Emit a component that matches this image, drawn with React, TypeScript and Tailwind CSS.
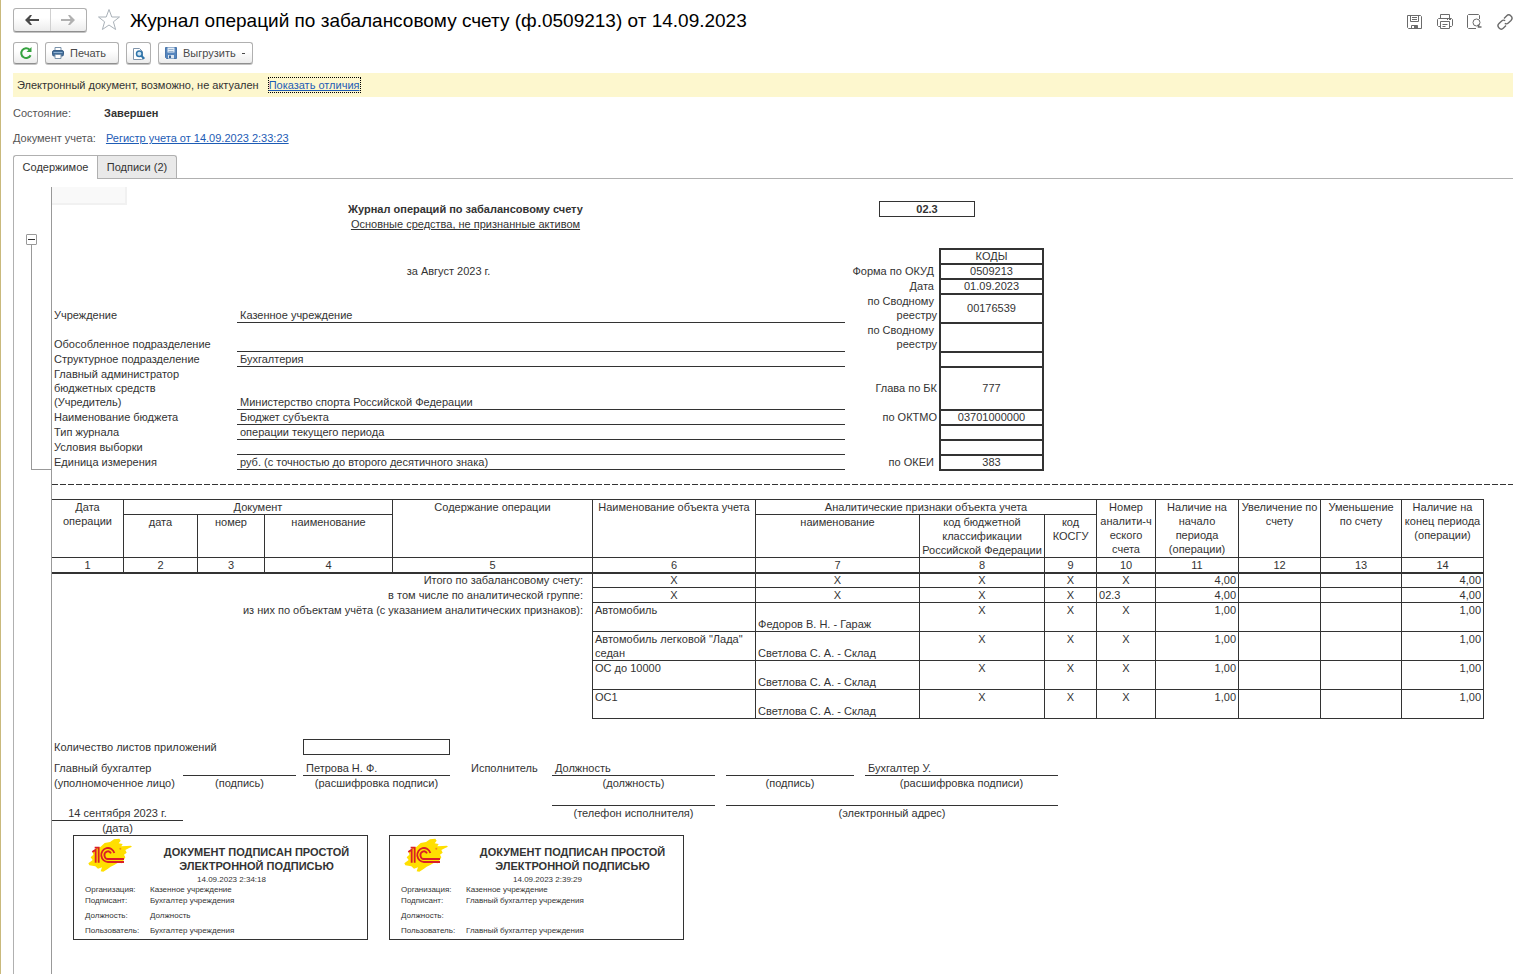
import { useState } from 'react';

const colWidths = [
  'w-[72px]', 'w-[74px]', 'w-[67px]', 'w-[128px]', 'w-[200px]', 'w-[163px]', 'w-[164px]',
  'w-[125px]', 'w-[52px]', 'w-[59px]', 'w-[83px]', 'w-[82px]', 'w-[81px]', 'w-[82px]',
];

interface FormRow {
  label?: string;
  value?: string;
  lined?: boolean;
  codeLabel?: string;
  code?: string;
  height: string;
  center?: string;
}

const formRows: FormRow[] = [
  { code: 'КОДЫ', height: 'h-[15px]' },
  { center: 'за Август 2023 г.', codeLabel: 'Форма по ОКУД\u00a0', code: '0509213', height: 'h-[15px]' },
  { codeLabel: 'Дата\u00a0', code: '01.09.2023', height: 'h-[15px]' },
  { label: 'Учреждение', value: 'Казенное учреждение', codeLabel: 'по Сводному\u00a0 реестру', code: '00176539', height: 'h-[29px]' },
  { label: 'Обособленное подразделение', lined: true, codeLabel: 'по Сводному\u00a0 реестру', height: 'h-[29px]' },
  { label: 'Структурное подразделение', value: 'Бухгалтерия', lined: true, height: 'h-[15px]' },
  { label: 'Главный администратор бюджетных средств (Учредитель)', value: 'Министерство спорта Российской Федерации', lined: true, codeLabel: 'Глава по БК', code: '777', height: 'h-[43px]' },
  { label: 'Наименование бюджета', value: 'Бюджет субъекта', lined: true, codeLabel: 'по ОКТМО', code: '03701000000', height: 'h-[15px]' },
  { label: 'Тип журнала', value: 'операции текущего периода', lined: true, height: 'h-[15px]' },
  { label: 'Условия выборки', lined: true, height: 'h-[15px]' },
  { label: 'Единица измерения', value: 'руб. (с точностью до второго десятичного знака)', lined: true, codeLabel: 'по ОКЕИ\u00a0', code: '383', height: 'h-[15px]' },
];

const totals = [
  { label: 'Итого по забалансовому счету:', account: 'X', amount: '4,00' },
  { label: 'в том числе по аналитической группе:', account: '02.3', amount: '4,00' },
];

const objects = [
  { name: 'Автомобиль', place: 'Федоров В. Н. - Гараж', amount: '1,00' },
  { name: 'Автомобиль легковой "Лада" седан', place: 'Светлова С. А. - Склад', amount: '1,00' },
  { name: 'ОС до 10000', place: 'Светлова С. А. - Склад', amount: '1,00' },
  { name: 'ОС1', place: 'Светлова С. А. - Склад', amount: '1,00' },
];

const stamps = [
  { time: '14.09.2023 2:34:18', org: 'Казенное учреждение', signer: 'Бухгалтер учреждения', position: 'Должность', user: 'Бухгалтер учреждения' },
  { time: '14.09.2023 2:39:29', org: 'Казенное учреждение', signer: 'Главный бухгалтер учреждения', position: '', user: 'Главный бухгалтер учреждения' },
];

const toolButton =
  'flex h-[22px] items-center rounded-[3px] border border-[#b0b0b0] border-b-[#8f8f8f] bg-linear-to-b from-white from-40% to-[#ececec] shadow-[0_1px_0_#c4c4c4]';

function ArrowIcon({ back, className }: { back?: boolean; className: string }) {
  return (
    <svg viewBox="0 0 14 10" className={`h-[10px] w-[14px] ${className}`} fill="currentColor">
      {back ? (
        <path d="M0 5L5 0H7L4.5 4H14V6H4.5L7 10H5Z" />
      ) : (
        <path d="M14 5L9 0H7L9.5 4H0V6H9.5L7 10H9Z" />
      )}
    </svg>
  );
}

function StarIcon() {
  return (
    <svg viewBox="0 0 24 24" className="size-6" fill="none" stroke="#a9b1b8" strokeWidth="1">
      <path d="M12 1.5L14.8 9H22.5L16.4 13.8L18.6 21.5L12 17L5.4 21.5L7.6 13.8L1.5 9H9.2Z" />
    </svg>
  );
}

function RefreshIcon() {
  return (
    <svg viewBox="0 0 14 14" className="size-[14px]" fill="none" stroke="#35a23f" strokeWidth="2">
      <path d="M11.6 9.2A4.9 4.9 0 1 1 10.6 3.6" />
      <path d="M12.5 1V6H7.5Z" fill="#35a23f" stroke="none" />
    </svg>
  );
}

function PrinterIcon() {
  return (
    <svg viewBox="0 0 12 12" className="size-3">
      <path d="M3 0.5H9V4H3Z" fill="#fff" stroke="#7b93ab" />
      <rect x="0.5" y="3.5" width="11" height="5.5" rx="1.5" fill="#426d99" stroke="#3a5f86" />
      <path d="M1.5 5.5H10.5" stroke="#8fb1d2" />
      <path d="M3 7.5H9V11.5H3Z" fill="#fff" stroke="#7b93ab" />
    </svg>
  );
}

function PreviewIcon() {
  return (
    <svg viewBox="0 0 13 13" className="size-[13px]" fill="none">
      <path d="M9.5 12.5H1.5V1.5H7.5L10.5 4.5V12.5Z" fill="#fff" stroke="#8095ab" />
      <circle cx="7.3" cy="6.8" r="2.8" fill="#cfe5f5" stroke="#2f75ab" strokeWidth="1.5" />
      <path d="M9.3 8.8L12.3 11.8" stroke="#2f75ab" strokeWidth="2" />
    </svg>
  );
}

function SaveIcon() {
  return (
    <svg viewBox="0 0 12 12" className="size-3">
      <path d="M0.5 0.5H11.5V11.5H1.5L0.5 10.5Z" fill="#5585bd" stroke="#4a76ab" />
      <rect x="2.5" y="0.5" width="7" height="5" fill="#e5eef7" />
      <path d="M3.5 2.5H8.5M3.5 4.5H8.5" stroke="#9bb5d0" />
      <rect x="3" y="8" width="6" height="3.5" fill="#dce5ee" />
      <rect x="4" y="8.5" width="2" height="2.5" fill="#3c679a" />
    </svg>
  );
}

// Иконки команд окна в правом верхнем углу
function WindowIcons() {
  const cls = 'size-4 shrink-0';
  return (
    <div className="flex items-center gap-[14px] text-[#6b6b6b]">
      <button aria-label="Сохранить">
        <svg viewBox="0 0 16 16" className={cls} fill="none" stroke="currentColor">
          <path d="M0.5 1.5H13.5L14.5 2.5V14.5H1.5L0.5 13.5Z" />
          <path d="M3.5 1.5V7.5H11.5V1.5M5 3.5H10M5 5.5H10M4.5 14.5V11.5H10.5V14.5" />
          <path d="M7 11.5H10.5V14.5H7Z" fill="currentColor" stroke="none" />
        </svg>
      </button>
      <button aria-label="Печать документа">
        <svg viewBox="0 0 16 16" className={cls} fill="none" stroke="currentColor">
          <path d="M3.5 4.5V0.5H12.5V4.5M3.5 12.5H1.5L0.5 11.5V5.5L1.5 4.5H14.5L15.5 5.5V11.5L14.5 12.5H12.5" />
          <path d="M3.5 7.5H12.5V14.5H3.5ZM5.5 10.5H10.5M5.5 12.5H8.5M10 5.5H11M12 5.5H14" />
        </svg>
      </button>
      <button aria-label="Просмотр документа">
        <svg viewBox="0 0 16 16" className={cls} fill="none" stroke="currentColor">
          <path d="M9 14.5H1.5L0.5 13.5V1.5L1.5 0.5H11.5L12.5 1.5V5" />
          <circle cx="9.5" cy="8.5" r="3.5" />
          <path d="M11.5 10.5V13H14.5" strokeWidth="1.6" />
        </svg>
      </button>
      <button aria-label="Получить ссылку">
        <svg viewBox="0 0 16 16" className={cls} fill="none" stroke="currentColor" strokeWidth="1.4">
          <path d="M7 4.5L9.5 2A3 3 0 0 1 14 6.4L11.3 9A2.8 2.8 0 0 1 7.8 9.3" />
          <path d="M9 11.5L6.5 14A3 3 0 0 1 2 9.6L4.7 7A2.8 2.8 0 0 1 8.2 6.7" />
        </svg>
      </button>
    </div>
  );
}

function Logo() {
  return (
    <svg viewBox="24 12 132 102" className="h-[34px] w-11">
      <path
        d="M38 54L50 42L62 38L74 27L90 24L102 16L118 14L122 20L116 28L128 30L124 37L140 36L152 35L156 38L146 43L136 48L140 56L132 62L136 70L126 88L114 86L104 92L92 98L84 104L70 113L62 112L66 100L54 104L46 97L28 94L25 88L38 78L32 70L40 62Z"
        fill="#ffdf00"
      />
      <g fill="none" stroke="#da1f26" strokeWidth="5.5">
        <path d="M37 54L47 47V86" />
        <path d="M44 41L56 41V86" />
        <path d="M103 57A20 21 0 1 0 85 84H132" />
        <path d="M93 58A10.500 11.500 0 1 0 85 75H132" />
      </g>
      <circle cx="121" cy="44" r="3" fill="#f08a1c" />
    </svg>
  );
}

function FormHeader() {
  return (
    <div className="mt-[17px]">
      {formRows.map((row, idx) => (
        <div key={idx} className={`flex ${row.height}`}>
          {row.center ? (
            <div className="w-[793px] pt-px text-center">{row.center}</div>
          ) : (
            <>
              <div className="flex w-[185px] items-end pr-[30px] pl-0.5">
                <span className={row.height === 'h-[43px]' ? '' : 'whitespace-nowrap'}>{row.label}</span>
              </div>
              <div className={`flex w-[608px] items-end border-t pl-[3px] ${row.lined ? 'border-[#333]' : 'border-transparent'}`}>
                {row.value}
              </div>
            </>
          )}
          <div className="flex w-[94px] items-center justify-end pt-px pr-0.5 text-right">
            <span className={row.height === 'h-[29px]' ? 'w-[80px]' : 'whitespace-nowrap'}>{row.codeLabel}</span>
          </div>
          <div className="flex w-[105px] items-center justify-center border-x-2 border-t-2 border-[#333] leading-[13px]">{row.code}</div>
        </div>
      ))}
      <div className="flex h-0.5">
        <div className="ml-[185px] w-[608px] border-t border-[#333]" />
        <div className="ml-[94px] w-[105px] bg-[#333]" />
      </div>
    </div>
  );
}

function OperationsTable() {
  const th = 'border-t border-r border-[#333] p-0 align-top font-normal';
  const td = 'border-t border-r border-[#333] px-0.5 py-0 align-top';
  return (
    <table className="mt-[14px] w-[1432px] table-fixed border-separate border-spacing-0">
      <colgroup>
        {colWidths.map((w, i) => (
          <col key={i} className={w} />
        ))}
      </colgroup>
      <thead>
        <tr className="h-[15px]">
          <th rowSpan={2} className={th}>Дата операции</th>
          <th colSpan={3} className={th}>Документ</th>
          <th rowSpan={2} className={th}>Содержание операции</th>
          <th rowSpan={2} className={th}>Наименование объекта учета</th>
          <th colSpan={3} className={th}>Аналитические признаки объекта учета</th>
          <th rowSpan={2} className={th}>Номер<br />аналити-ч<br />еского<br />счета</th>
          <th rowSpan={2} className={th}>Наличие на начало<br />периода<br />(операции)</th>
          <th rowSpan={2} className={th}>Увеличение по<br />счету</th>
          <th rowSpan={2} className={th}>Уменьшение<br />по счету</th>
          <th rowSpan={2} className={th}>Наличие на<br />конец периода<br />(операции)</th>
        </tr>
        <tr className="h-[43px]">
          <th className={th}>дата</th>
          <th className={th}>номер</th>
          <th className={th}>наименование</th>
          <th className={th}>наименование</th>
          <th className={th}>код бюджетной<br />классификации<br />Российской Федерации</th>
          <th className={th}>код КОСГУ</th>
        </tr>
        <tr className="h-[15px]">
          {colWidths.map((_, i) => (
            <th key={i} className={th}>{i + 1}</th>
          ))}
        </tr>
      </thead>
      <tbody>
        {totals.map((row, idx) => {
          const cell = idx === 0 ? 'border-t-2 border-r border-[#333] px-0.5 py-0 leading-[13px]' : td;
          return (
            <tr key={row.label} className="h-[15px] text-center">
              <td colSpan={5} className={`border-r border-[#333] py-0 pr-[9px] text-right ${idx === 0 ? 'border-t-2 leading-[13px]' : 'pt-px'}`}>{row.label}</td>
              <td className={cell}>X</td>
              <td className={cell}>X</td>
              <td className={cell}>X</td>
              <td className={cell}>X</td>
              <td className={`${cell} ${row.account === 'X' ? '' : 'text-left'}`}>{row.account}</td>
              <td className={`${cell} text-right`}>{row.amount}</td>
              <td className={cell} />
              <td className={cell} />
              <td className={`${cell} text-right`}>{row.amount}</td>
            </tr>
          );
        })}
        {objects.map((row, idx) => {
          const cell = idx === objects.length - 1 ? `${td} border-b` : td;
          return (
            <tr key={row.name} className="h-[29px] text-center">
              <td colSpan={5} className="border-r border-[#333] py-0 pt-px pr-[9px] text-right align-top">
                {idx === 0 && 'из них по объектам учёта (с указанием аналитических признаков):'}
              </td>
              <td className={`${cell} text-left`}>{row.name}</td>
              <td className={`${cell} text-left`}><br />{row.place}</td>
              <td className={cell}>X</td>
              <td className={cell}>X</td>
              <td className={cell}>X</td>
              <td className={`${cell} text-right`}>{row.amount}</td>
              <td className={cell} />
              <td className={cell} />
              <td className={`${cell} text-right`}>{row.amount}</td>
            </tr>
          );
        })}
      </tbody>
    </table>
  );
}

function Signatures() {
  const line = 'border-b border-[#333] pl-[3px]';
  return (
    <>
      <div className="mt-5 flex">
        <div className="w-[251px] pt-px pl-0.5">Количество листов приложений</div>
        <div className="h-4 w-[147px] border border-[#333]" />
      </div>
      <div className="mt-1.5 grid w-[1006px] auto-rows-[15px] grid-cols-[131px_113px_7px_147px_102px_163px_11px_128px_11px_193px]">
        <div className="pl-0.5">Главный бухгалтер</div>
        <div className={line} />
        <div />
        <div className={line}>Петрова Н. Ф.</div>
        <div className="pl-[21px]">Исполнитель</div>
        <div className={line}>Должность</div>
        <div />
        <div className={line} />
        <div />
        <div className={line}>Бухгалтер У.</div>

        <div className="pl-0.5 whitespace-nowrap">(уполномоченное лицо)</div>
        <div className="text-center">(подпись)</div>
        <div />
        <div className="text-center whitespace-nowrap">(расшифровка подписи)</div>
        <div />
        <div className="text-center">(должность)</div>
        <div />
        <div className="text-center">(подпись)</div>
        <div />
        <div className="text-center">(расшифровка подписи)</div>

        <div className="col-span-5" />
        <div className={line} />
        <div />
        <div className={`col-span-3 ${line}`} />

        <div className="border-b border-[#333] text-center">14 сентября 2023 г.</div>
        <div className="col-span-4" />
        <div className="text-center">(телефон исполнителя)</div>
        <div />
        <div className="col-span-3 text-center">(электронный адрес)</div>

        <div className="text-center">(дата)</div>
      </div>
    </>
  );
}

function Stamp({ stamp }: { stamp: (typeof stamps)[number] }) {
  return (
    <div className="h-[105px] w-[295px] border border-[#333]">
      <div className="flex">
        <div className="w-[72px] pt-0.5 pl-[14px]">
          <Logo />
        </div>
        <div className="w-[221px] pt-[9px] text-center font-bold">
          ДОКУМЕНТ ПОДПИСАН ПРОСТОЙ<br />ЭЛЕКТРОННОЙ ПОДПИСЬЮ
        </div>
      </div>
      <div className="pt-0.5 pl-[22px] text-center text-[8px] leading-[9px]">{stamp.time}</div>
      <dl className="grid grid-cols-[65px_1fr] pl-[11px] text-[8px] leading-[11px]">
        <dt>Организация:</dt>
        <dd>{stamp.org}</dd>
        <dt>Подписант:</dt>
        <dd>{stamp.signer}</dd>
        <dt className="pt-1">Должность:</dt>
        <dd className="pt-1">{stamp.position}</dd>
        <dt className="pt-1">Пользователь:</dt>
        <dd className="pt-1">{stamp.user}</dd>
      </dl>
    </div>
  );
}

export default function App() {
  const [tab, setTab] = useState<'content' | 'signs'>('content');
  const [expanded, setExpanded] = useState(true);

  return (
    <div className="flex min-h-screen flex-col overflow-hidden border-l border-[#c9b97c] bg-white pl-3 font-['Liberation_Sans',Arial,sans-serif] text-[11px] leading-[14px] text-[#333]">
      <header className="flex h-10 items-center">
        <div className="flex h-6 w-[74px] rounded-[3px] border border-[#b0b0b0] border-b-[#8f8f8f] bg-linear-to-b from-white from-40% to-[#ececec] shadow-[0_1px_0_#c4c4c4]">
          <button aria-label="Назад" className="flex flex-1 items-center justify-center border-r border-[#d0d0d0]">
            <ArrowIcon back className="text-[#4a4a4a]" />
          </button>
          <button aria-label="Вперед" className="flex flex-1 items-center justify-center">
            <ArrowIcon className="text-[#b0b0b0]" />
          </button>
        </div>
        <button aria-label="В избранное" className="ml-[10px]">
          <StarIcon />
        </button>
        <h1 className="ml-[9px] pt-0.5 text-[19px] leading-6 whitespace-nowrap text-black">
          Журнал операций по забалансовому счету (ф.0509213) от 14.09.2023
        </h1>
        <div className="ml-auto pt-1">
          <WindowIcons />
        </div>
      </header>

      <div className="mt-0.5 flex gap-[7px] text-[#4a4a4a]">
        <button aria-label="Обновить" className={`${toolButton} w-[25px] justify-center`}>
          <RefreshIcon />
        </button>
        <button className={`${toolButton} w-[74px] gap-[6px] pl-[6px]`}>
          <PrinterIcon /> Печать
        </button>
        <button aria-label="Предварительный просмотр" className={`${toolButton} w-[25px] justify-center`}>
          <PreviewIcon />
        </button>
        <button className={`${toolButton} w-[95px] gap-[6px] pl-[6px]`}>
          <SaveIcon /> Выгрузить
          <span className="h-px w-[3px] bg-[#4a4a4a]" />
        </button>
      </div>

      <div className="mt-[9px] flex h-6 items-center gap-[9px] bg-[#fdf7ce] pl-1">
        Электронный документ, возможно, не актуален
        <a href="#diff" className="border border-dotted border-black text-[#1d5cb5] underline">Показать отличия</a>
      </div>

      <div className="mt-[9px] flex">
        <span className="w-[91px] text-[#555]">Состояние:</span>
        <b>Завершен</b>
      </div>
      <div className="mt-[11px] flex gap-[10px]">
        <span className="text-[#555]">Документ учета:</span>
        <a href="#register" className="text-[#1d5cb5] underline">Регистр учета от 14.09.2023 2:33:23</a>
      </div>

      <div role="tablist" className="mt-[10px] flex h-6 border-b border-[#b0b0b0]">
        <button
          role="tab"
          aria-selected={tab === 'content'}
          onClick={() => setTab('content')}
          className="-mb-px h-6 w-[84px] rounded-tl-[3px] border-t border-l border-[#b0b0b0] bg-white pb-0.5"
        >
          Содержимое
        </button>
        <button
          role="tab"
          aria-selected={tab === 'signs'}
          onClick={() => setTab('signs')}
          className="h-[23px] w-20 rounded-tr-[3px] border-x border-t border-[#b0b0b0] bg-[#e9e9e9] pb-px"
        >
          Подписи (2)
        </button>
      </div>

      <main className="flex flex-1 border-l border-[#b0b0b0] pt-2">
        <div className="w-[37px] shrink-0 pt-[47px]">
          <button
            aria-label="Свернуть группу"
            onClick={() => setExpanded(!expanded)}
            className="ml-3 flex size-[11px] items-center justify-center rounded-[1px] border border-[#999] bg-white"
          >
            <span className="h-px w-[7px] bg-[#333]" />
          </button>
          <div className="ml-[17px] h-[225px] border-b border-l border-[#999]" />
        </div>
        <div className="min-w-0 flex-1 border-l border-[#999]">
          <div className="h-[14px]">
            <div className="h-[18px] w-[75px] border-r-2 border-b-2 border-[#f1f1f1] bg-[#f9f9f9]" />
          </div>
          <div className="flex font-bold">
            <div className="w-[827px] pt-px text-center">Журнал операций по забалансовому счету</div>
            <div className="h-4 w-24 border border-[#333] text-center">02.3</div>
          </div>
          <div className="-mt-px w-[827px] pt-px text-center underline">Основные средства, не признанные активом</div>
          {expanded && <FormHeader />}
          <div className="mt-[13px] h-px bg-[repeating-linear-gradient(to_right,#333_0_6px,transparent_6px_8px)]" />
          <OperationsTable />
          <Signatures />
          <div className="-mt-px flex gap-[21px] pl-[21px]">
            {stamps.map((stamp) => (
              <Stamp key={stamp.time} stamp={stamp} />
            ))}
          </div>
        </div>
      </main>
    </div>
  );
}
